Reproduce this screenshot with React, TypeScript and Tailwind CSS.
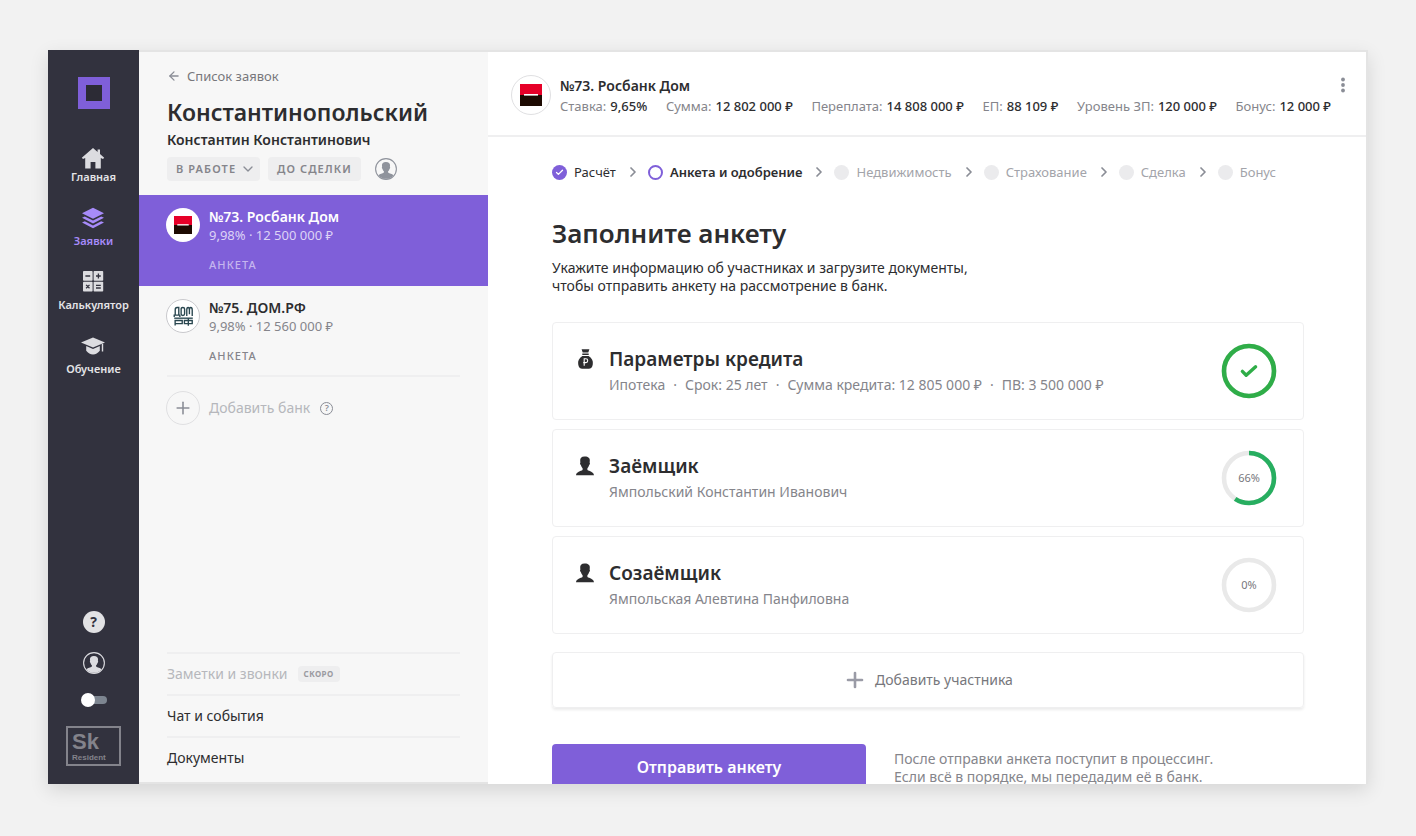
import React from 'react';
import { ArrowLeft, Check, ChevronDown, ChevronRight, Plus } from 'lucide-react';

interface BankApplication {
  id: string;
  title: string;
  rate: string;
  amount: string;
  status: string;
  active: boolean;
  logo: React.ReactNode;
}

interface FormSection {
  id: string;
  title: string;
  details: string[];
  icon: React.ReactNode;
  percent: number;
  arc: number;
}

const RosbankLogo = ({ size }: { size: number }) => (
  <svg width={size} height={size} viewBox="0 0 22 22">
    <rect width="22" height="11" fill="#e60028" />
    <rect y="11" width="22" height="11" fill="#1d0a02" />
    <rect x="4" y="10" width="14" height="1.6" fill="#fff" />
  </svg>
);

const DomRfLogo = () => (
  <svg width="21" height="20" viewBox="0 0 22 22" fill="none" stroke="#2a4750" strokeWidth="1.5">
    <path d="M0.8 12V10H7V12" />
    <path d="M1.9 10V4Q1.9 1.6 3.9 1.6H5.8V10" />
    <path d="M8.4 3.4Q8.4 1.6 10.3 1.6Q12.2 1.6 12.2 3.4V8.6Q12.2 10.4 10.3 10.4Q8.4 10.4 8.4 8.6Z" />
    <path d="M14.6 11V4.4Q14.6 1.6 16.1 1.6Q17.5 1.6 17.5 4.4V9M17.5 4.4Q17.5 1.6 19 1.6Q20.6 1.6 20.6 4.4V11" />
    <path d="M0.8 13.4H21.2" />
    <path d="M1.8 21.4V16H9.6V19.4H1.8" />
    <path d="M12 16H20.6V19.4H12ZM16.3 13.4V21.6" />
  </svg>
);

const HomeIcon = () => (
  <svg width="26" height="26" viewBox="0 0 26 26" fill="#dcdce0">
    <path d="M13 5 1.8 14.8 3 16 5.2 15V25.4H10.6V19H15.4V25.4H20.8V15L23 16 24.2 14.8 20 11V6.6H17.6V9Z" />
  </svg>
);

const LayersIcon = () => (
  <svg width="26" height="26" viewBox="0 0 26 26" fill="#a78bfa">
    <path d="M13 0.8 24 6.2 13 11.8 2 6.2Z" />
    <path d="M2 10.8 4.8 9.4 13 13.6 21.2 9.4 24 10.8 13 16.5Z" />
    <path d="M2 15.6 4.8 14.2 13 18.4 21.2 14.2 24 15.6 13 21.3Z" />
  </svg>
);

const CalculatorIcon = () => (
  <svg width="26" height="26" viewBox="0 0 26 26">
    <g fill="#dcdce0">
      <rect x="3" y="0" width="9.6" height="9.8" rx="0.8" />
      <rect x="13.6" y="0" width="9.6" height="9.8" rx="0.8" />
      <rect x="3" y="10.8" width="9.6" height="9.8" rx="0.8" />
      <rect x="13.6" y="10.8" width="9.6" height="9.8" rx="0.8" />
    </g>
    <path
      d="M5.4 5H10.2M16 5H20.8M18.4 2.6V7.4M6.1 13.9 9.5 17.3M9.5 13.9 6.1 17.3M16 14.4H20.8M16 17H20.8"
      stroke="#32323e"
      strokeWidth="1.3"
    />
  </svg>
);

const GraduationIcon = () => (
  <svg width="26" height="26" viewBox="0 0 26 26" fill="#dcdce0">
    <path d="M13 2.5 25 7.5 13 12.5 1 7.5Z" />
    <path d="M6.2 11V15.8Q9 19.4 13 19.4T19.8 15.8V11L13 13.9Z" />
    <path d="M21.8 8.8H23.2V16.5H21.8Z" />
  </svg>
);

const PersonIcon = () => (
  <svg width="18" height="20" viewBox="0 0 18 20" fill="#2d2d2f">
    <path d="M9 0.6C5.6 0.4 3.9 2 4.2 5L4.4 6.6C3.7 6.7 4.1 8.8 4.9 9.2C5.3 10.6 5.9 11.6 6.6 12.2V14C4.6 15.2 0.4 15.8 0 19.2H18C17.6 15.8 13.4 15.2 11.4 14V12.2C12.1 11.6 12.7 10.6 13.1 9.2C13.9 8.8 14.3 6.7 13.6 6.6L13.8 5C14.1 2 12.2 0.8 9 0.6Z" />
  </svg>
);

const MoneyBagIcon = () => (
  <svg width="18" height="20" viewBox="0 0 18 20">
    <path
      d="M5.6 0.3H13.4L12.3 3.4H6.7ZM6.3 4.4H12.7V6H6.3ZM6.3 7H12.7C16 9 17.3 12 16.8 15.2C16.5 18.4 14.8 19.8 12.8 19.8H6.2C4.2 19.8 2.5 18.4 2.2 15.2C1.7 12 3 9 6.3 7Z"
      fill="#2d2d2f"
    />
    <path d="M8.2 16.8V9.8H9.8A1.9 1.9 0 0 1 9.8 13.6H7.2" fill="none" stroke="#fff" strokeWidth="1.1" />
  </svg>
);

const AvatarIcon = ({ ring, body }: { ring: string; body: string }) => (
  <svg width="22" height="22" viewBox="0 0 22 22">
    <circle cx="11" cy="11" r="10.4" fill="none" stroke={ring} strokeWidth="1.1" />
    <path
      d="M11 4C8 3.9 6.7 5.5 7 7.8L7.1 9C6.6 9.1 6.9 10.6 7.5 10.9C7.8 12 8.3 12.7 8.9 13.2V14.5C7.6 15.6 4.6 15.6 3.6 17.4A9.8 9.8 0 0 0 18.4 17.4C17.4 15.6 14.4 15.6 13.1 14.5V13.2C13.7 12.7 14.2 12 14.5 10.9C15.1 10.6 15.4 9.1 14.9 9L15 7.8C15.3 5.5 14 4.1 11 4Z"
      fill={body}
    />
  </svg>
);

const navItems = [
  { label: 'Главная', icon: <HomeIcon />, active: false },
  { label: 'Заявки', icon: <LayersIcon />, active: true },
  { label: 'Калькулятор', icon: <CalculatorIcon />, active: false },
  { label: 'Обучение', icon: <GraduationIcon />, active: false },
];

const applications: BankApplication[] = [
  {
    id: '73',
    title: '№73. Росбанк Дом',
    rate: '9,98%',
    amount: '12 500 000 ₽',
    status: 'АНКЕТА',
    active: true,
    logo: <RosbankLogo size={18} />,
  },
  {
    id: '75',
    title: '№75. ДОМ.РФ',
    rate: '9,98%',
    amount: '12 560 000 ₽',
    status: 'АНКЕТА',
    active: false,
    logo: <DomRfLogo />,
  },
];

const stats = [
  { label: 'Ставка', value: '9,65%' },
  { label: 'Сумма', value: '12 802 000 ₽' },
  { label: 'Переплата', value: '14 808 000 ₽' },
  { label: 'ЕП', value: '88 109 ₽' },
  { label: 'Уровень ЗП', value: '120 000 ₽' },
  { label: 'Бонус', value: '12 000 ₽' },
];

const steps = [
  { label: 'Расчёт', state: 'done' },
  { label: 'Анкета и одобрение', state: 'current' },
  { label: 'Недвижимость', state: 'next' },
  { label: 'Страхование', state: 'next' },
  { label: 'Сделка', state: 'next' },
  { label: 'Бонус', state: 'next' },
];

const sections: FormSection[] = [
  {
    id: 'params',
    title: 'Параметры кредита',
    details: ['Ипотека', 'Срок: 25 лет', 'Сумма кредита: 12 805 000 ₽', 'ПВ: 3 500 000 ₽'],
    icon: <MoneyBagIcon />,
    percent: 100,
    arc: 1,
  },
  {
    id: 'borrower',
    title: 'Заёмщик',
    details: ['Ямпольский Константин Иванович'],
    icon: <PersonIcon />,
    percent: 66,
    arc: 0.59,
  },
  {
    id: 'coborrower',
    title: 'Созаёмщик',
    details: ['Ямпольская Алевтина Панфиловна'],
    icon: <PersonIcon />,
    percent: 0,
    arc: 0,
  },
];

const ProgressRing = ({ percent, arc }: { percent: number; arc: number }) => {
  const radius = 25;
  const length = 2 * Math.PI * radius;
  const done = percent === 100;

  return (
    <div className="grid shrink-0 place-items-center">
      <svg width="56" height="56" viewBox="0 0 56 56" fill="none" className="col-start-1 row-start-1">
        <circle cx="28" cy="28" r={radius} stroke="#e9e9e9" strokeWidth="4.6" />
        {arc > 0 && (
          <circle
            cx="28"
            cy="28"
            r={radius}
            stroke={done ? '#2fad48' : '#27ae60'}
            strokeWidth="4.6"
            strokeDasharray={`${length * arc} ${length}`}
            transform="rotate(-90 28 28)"
          />
        )}
        {done && (
          <path
            d="M21.4 28.4 25.2 32.2 34.6 23.8"
            stroke="#2fad48"
            strokeWidth="3.4"
            strokeLinecap="round"
            strokeLinejoin="round"
          />
        )}
      </svg>
      {!done && <span className="col-start-1 row-start-1 text-[11px] text-[#77777c]">{percent}%</span>}
    </div>
  );
};

const Sidebar = () => (
  <nav className="flex w-[91px] shrink-0 flex-col items-center bg-[#32323e] pt-[27px] pb-[18px]">
    <svg width="32" height="32" viewBox="0 0 32 32">
      <rect width="32" height="32" fill="#7f5fd9" />
      <rect x="8" y="8" width="16" height="16" fill="#2c2b35" />
    </svg>

    <div className="mt-[34px] flex flex-col gap-[22px]">
      {navItems.map((item) => (
        <a key={item.label} href="#" className="flex flex-col items-center">
          {item.icon}
          <span
            className={
              item.active
                ? 'text-[11px] leading-4 font-semibold text-[#a78bfa]'
                : 'text-[11px] leading-4 font-semibold text-[#e4e4e7]'
            }
          >
            {item.label}
          </span>
        </a>
      ))}
    </div>

    <div className="mt-auto flex flex-col items-center gap-[19px]">
      <button
        type="button"
        className="flex size-[22px] items-center justify-center rounded-full bg-[#e2e2e4] text-sm font-bold text-[#32323e]"
      >
        ?
      </button>
      <button type="button" aria-label="Профиль">
        <AvatarIcon ring="#dcdce0" body="#dcdce0" />
      </button>
      <label className="flex h-3.5 w-[26px] items-center">
        <input type="checkbox" role="switch" aria-label="Тема" className="sr-only" />
        <span className="z-10 size-3.5 shrink-0 rounded-full bg-white" />
        <span className="-ml-1 h-2 flex-1 rounded-r-full bg-[#7d8590]" />
      </label>
      <div className="flex h-10 w-[55px] flex-col justify-center border-2 border-[#83838b] pl-1 font-['Liberation_Sans',sans-serif] font-bold text-[#83838b]">
        <span className="text-[22px] leading-6">Sk</span>
        <span className="text-[8px] leading-2">Resident</span>
      </div>
    </div>
  </nav>
);

const ApplicationCard = ({ app }: { app: BankApplication }) => (
  <a
    href="#"
    className={
      app.active
        ? 'flex h-[91px] gap-[9px] bg-[#7f5fd9] pt-[13px] pl-[27px] text-white'
        : 'flex h-[89px] gap-[9px] pt-[13px] pl-[27px] text-[#2d2d2f]'
    }
  >
    <span
      className={
        app.active
          ? 'flex size-[34px] shrink-0 items-center justify-center rounded-full bg-white'
          : 'flex size-[34px] shrink-0 items-center justify-center rounded-full border border-[#c9c9cd] bg-white'
      }
    >
      {app.logo}
    </span>
    <span className="flex flex-col">
      <span className="text-sm leading-[18px] font-semibold">{app.title}</span>
      <span className={app.active ? 'text-[13px] leading-[18px] text-[#ddd3f6]' : 'text-[13px] leading-[18px] text-[#85858b]'}>
        {app.rate} · {app.amount}
      </span>
      <span
        className={
          app.active
            ? 'mt-3 text-[11px] leading-[18px] font-medium tracking-widest text-[#c5b5ee]'
            : 'mt-3 text-[11px] leading-[18px] font-medium tracking-widest text-[#85858b]'
        }
      >
        {app.status}
      </span>
    </span>
  </a>
);

const ClientPanel = () => (
  <aside className="flex w-[349px] shrink-0 flex-col border-y-2 border-[#e4e4e4] bg-[#f7f7f7]">
    <div className="px-7 pt-[14px]">
      <a href="#" className="flex items-center gap-1.5 text-[13px] leading-5 text-[#77777c]">
        <ArrowLeft size={14} strokeWidth={2.2} className="text-[#8a8d96]" />
        Список заявок
      </a>
      <h1 className="mt-2.5 text-[23px] leading-8 font-semibold text-[#2d2d2f]">Константинопольский</h1>
      <p className="mt-0.5 text-sm leading-5 font-semibold text-[#2d2d2f]">Константин Константинович</p>
      <div className="mt-[7px] flex items-center gap-2">
        <div className="grid items-center">
          <select
            aria-label="Статус заявки"
            className="col-start-1 row-start-1 h-6 w-[93px] appearance-none rounded-sm bg-[#eeeeef] pl-[9px] text-[11px] font-semibold tracking-widest text-[#85858b]"
          >
            <option>В РАБОТЕ</option>
          </select>
          <ChevronDown
            size={16}
            strokeWidth={2}
            className="pointer-events-none col-start-1 row-start-1 mr-1 justify-self-end text-[#8a8d96]"
          />
        </div>
        <button
          type="button"
          className="h-6 w-[93px] rounded-sm bg-[#eeeeef] text-[11px] font-semibold tracking-widest text-[#85858b]"
        >
          ДО СДЕЛКИ
        </button>
        <button type="button" aria-label="Ответственный" className="ml-1.5">
          <AvatarIcon ring="#8f939c" body="#8f939c" />
        </button>
      </div>
    </div>

    <div className="mt-3.5">
      {applications.map((app) => (
        <ApplicationCard key={app.id} app={app} />
      ))}
    </div>

    <div className="mx-7 border-t-2 border-[#efeff0] pt-3.5">
      <div className="-ml-px flex items-center gap-2 text-sm text-[#b6b7bc]">
        <button type="button" className="flex items-center gap-[9px]">
          <span className="flex size-[34px] items-center justify-center rounded-full border border-[#e0e0e2]">
            <Plus size={20} strokeWidth={1.9} className="text-[#8a8d96]" />
          </span>
          Добавить банк
        </button>
        <button
          type="button"
          className="ml-0.5 flex size-[13px] items-center justify-center rounded-full border border-[#8a8d96] text-[9px] font-semibold text-[#8a8d96]"
        >
          ?
        </button>
      </div>
    </div>

    <div className="mx-7 mt-auto mb-1 text-sm text-[#2d2d2f]">
      <a href="#" className="flex h-[42px] items-center gap-2.5 border-t-2 border-[#efeff0] text-[#b6b7bc]">
        Заметки и звонки
        <span className="flex h-4 items-center rounded-sm bg-[#eeeeef] px-1.5 text-[8px] font-bold tracking-wider text-[#9a9aa0]">
          СКОРО
        </span>
      </a>
      <a href="#" className="flex h-[42px] items-center border-t-2 border-[#efeff0]">
        Чат и события
      </a>
      <a href="#" className="flex h-[42px] items-center border-t-2 border-[#efeff0]">
        Документы
      </a>
    </div>
  </aside>
);

const BankHeader = () => (
  <header className="flex items-center border-b-2 border-[#efeff0] pt-[22px] pr-[21px] pb-[19px] pl-[23px]">
    <span className="flex size-10 shrink-0 items-center justify-center rounded-full border border-[#e0e0e2]">
      <RosbankLogo size={22} />
    </span>
    <div className="ml-[9px] flex-1 pt-0.5">
      <h2 className="text-sm leading-5 font-semibold text-[#2d2d2f]">№73. Росбанк Дом</h2>
      <dl className="flex justify-between text-[13px] leading-5 whitespace-nowrap">
        {stats.map((stat) => (
          <div key={stat.label} className="flex gap-1">
            <dt className="text-[#85858b]">{stat.label}:</dt>
            <dd className="font-medium text-[#2d2d2f]">{stat.value}</dd>
          </div>
        ))}
      </dl>
    </div>
    <button type="button" aria-label="Ещё" className="ml-2.5 self-start">
      <svg width="4" height="20" viewBox="0 0 4 20" fill="#8a8d96">
        <circle cx="2" cy="5.5" r="1.9" />
        <circle cx="2" cy="11" r="1.9" />
        <circle cx="2" cy="16.5" r="1.9" />
      </svg>
    </button>
  </header>
);

const StepMarker = ({ state }: { state: string }) => {
  if (state === 'done') {
    return (
      <span className="flex size-[15px] items-center justify-center rounded-full bg-[#7f5fd9]">
        <Check size={9} strokeWidth={3.5} className="text-white" />
      </span>
    );
  }
  if (state === 'current') {
    return <span className="size-[15px] rounded-full border-2 border-[#7f5fd9]" />;
  }
  return <span className="size-[15px] rounded-full bg-[#ebebed]" />;
};

const Stepper = () => (
  <ol className="flex items-center gap-[9px] text-[13px] leading-5 whitespace-nowrap">
    {steps.map((step, index) => (
      <li key={step.label} className="flex items-center gap-[7px]">
        {index > 0 && <ChevronRight size={16} strokeWidth={2.6} className="text-[#8a8d96]" />}
        <span className="flex items-center gap-[7px]">
          <StepMarker state={step.state} />
          {step.state === 'done' && <span className="text-[#2d2d2f]">{step.label}</span>}
          {step.state === 'current' && <span className="font-semibold text-[#2d2d2f]">{step.label}</span>}
          {step.state === 'next' && <span className="text-[#a3a4aa]">{step.label}</span>}
        </span>
      </li>
    ))}
  </ol>
);

const SectionCard = ({ section }: { section: FormSection }) => (
  <article className="flex h-[98px] items-center justify-between rounded-sm border border-[#efeff0] pr-[26px] pl-[23px]">
    <div className="flex gap-[15px]">
      <span className="flex h-6 items-center">{section.icon}</span>
      <div>
        <h3 className="text-[19px] leading-6 font-semibold text-[#2d2d2f]">{section.title}</h3>
        <p className="mt-1 flex gap-2 text-sm leading-5 text-[#85858b]">
          {section.details.map((detail, index) => (
            <React.Fragment key={detail}>
              {index > 0 && <span>·</span>}
              <span>{detail}</span>
            </React.Fragment>
          ))}
        </p>
      </div>
    </div>
    <ProgressRing percent={section.percent} arc={section.arc} />
  </article>
);

const App: React.FC = () => {
  return (
    <div className="flex h-screen bg-[#f2f2f2] px-12 pt-[50px] pb-[52px] font-['Noto_Sans',sans-serif]">
      <div className="flex min-w-0 flex-1 overflow-hidden shadow-[0_6px_18px_rgba(0,0,0,0.12)]">
        <Sidebar />
        <ClientPanel />
        <main className="min-w-0 flex-1 overflow-hidden border-t-2 border-r-2 border-[#e4e4e4] bg-white">
          <BankHeader />
          <div className="pt-[25px] pr-[62px] pl-16">
            <Stepper />
            <h1 className="mt-[31px] text-[26px] leading-10 font-semibold text-[#2d2d2f]">Заполните анкету</h1>
            <p className="mt-1.5 text-sm leading-[18px] text-[#2d2d2f]">
              Укажите информацию об участниках и загрузите документы,
              <br />
              чтобы отправить анкету на рассмотрение в банк.
            </p>

            <div className="mt-[27px] flex flex-col gap-[9px]">
              {sections.map((section) => (
                <SectionCard key={section.id} section={section} />
              ))}
            </div>

            <button
              type="button"
              className="mt-[18px] flex h-14 w-full items-center justify-center gap-2 rounded-sm border border-[#efeff0] text-sm text-[#77777c] shadow-[0_2px_3px_rgba(0,0,0,0.08)]"
            >
              <Plus size={24} strokeWidth={2.6} className="text-[#9a9ba6]" />
              Добавить участника
            </button>

            <div className="mt-9 flex items-start gap-7">
              <button
                type="button"
                className="h-[46px] w-[314px] shrink-0 rounded-sm bg-[#7f5fd9] text-base font-semibold text-white"
              >
                Отправить анкету
              </button>
              <p className="mt-1.5 text-sm leading-[18px] text-[#85858b]">
                После отправки анкета поступит в процессинг.
                <br />
                Если всё в порядке, мы передадим её в банк.
              </p>
            </div>
          </div>
        </main>
      </div>
    </div>
  );
};

export default App;
